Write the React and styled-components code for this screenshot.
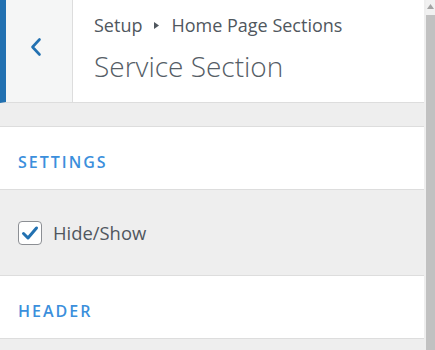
import React, { useState } from 'react'
import styled, { createGlobalStyle } from 'styled-components'

const Global = createGlobalStyle`
  *, *::before, *::after {
    box-sizing: border-box;
  }
  html, body {
    margin: 0;
    padding: 0;
    height: 100%;
    overflow: hidden;
    background: #eeeeee;
  }
  body {
    font-family: "Open Sans", "Noto Sans", sans-serif;
    color: #50575e;
  }
`;

const Frame = styled.div`
  display: flex;
  height: 350px;
  width: 435px;
`;

const Panel = styled.div`
  width: 424px;
  display: flex;
  flex-direction: column;
  overflow: hidden;

  & > * {
    flex-shrink: 0;
  }
`;

const Header = styled.header`
  display: flex;
  height: 103px;
  background: #fff;
  border-bottom: 1px solid #dddddd;
  border-left: 6px solid #2271b1;
`;

const BackBtn = styled.button`
  width: 67px;
  border: none;
  border-right: 1px solid #dddddd;
  background: #f5f6f6;
  color: #2271b1;
  display: flex;
  align-items: center;
  justify-content: center;
  padding: 0 6px 8px 0;
  cursor: pointer;
`;

const Titles = styled.div`
  padding: 10px 0 0 21px;
  display: flex;
  flex-direction: column;
`;

const Crumbs = styled.div`
  font-size: 18px;
  line-height: 30px;
  color: #50575e;
  display: flex;
  align-items: center;
  white-space: nowrap;
`;

const Arrow = styled.svg`
  margin: 1px 12px 0 12px;
`;

const Title = styled.h1`
  margin: 6px 0 0;
  font-size: 28px;
  font-weight: 300;
  line-height: 40px;
  color: #555d66;
  white-space: nowrap;
`;

const Gap = styled.div`
  height: ${({ h }) => h}px;
  background: #eeeeee;
`;

const Section = styled.div`
  background: #fff;
  border-top: 1px solid #dddddd;
  border-bottom: 1px solid #dddddd;
  height: 64px;
  display: flex;
  align-items: center;
  padding: 7px 18px 0;
  font-size: 16px;
  font-weight: 600;
  letter-spacing: 2px;
  color: #3b8fdc;
`;

const Body = styled.div`
  height: 85px;
  display: flex;
  align-items: center;
  gap: 11px;
  padding: 0 18px;
  font-size: 18.4px;
  color: #50575e;
  cursor: pointer;
`;

const Box = styled.span`
  width: 24px;
  height: 24px;
  border: 1px solid #8c8f94;
  border-radius: 4px;
  background: #fff;
  display: flex;
  align-items: center;
  justify-content: center;
`;

const Scroll = styled.div`
  margin-left: 2px;
  width: 9px;
  display: flex;
  flex-direction: column;
  background: #c1c1c1;
`;

const ScrollCap = styled.div`
  height: 15px;
  background: #f1f1f1;
  display: flex;
  justify-content: center;
  padding-top: 4px;
`;

const App = () => {
  const [shown, setShown] = useState(true)

  return (
    <>
      <Global />
      <Frame>
        <Panel>
          <Header>
            <BackBtn aria-label="Back">
              <svg width="14" height="20" viewBox="0 0 14 20">
                <path d="M10.5 2.5 L3.5 10 L10.5 17.5" fill="none" stroke="currentColor" strokeWidth="2.6" strokeLinecap="round" strokeLinejoin="round" />
              </svg>
            </BackBtn>
            <Titles>
              <Crumbs>
                Setup
                <Arrow width="5" height="7" viewBox="0 0 5 7">
                  <path d="M0 0 L5 3.5 L0 7 Z" fill="#50575e" />
                </Arrow>
                Home Page Sections
              </Crumbs>
              <Title>Service Section</Title>
            </Titles>
          </Header>
          <Gap h={23} />
          <Section>SETTINGS</Section>
          <Body onClick={() => setShown(!shown)}>
            <Box>
              {shown && (
                <svg width="18" height="16" viewBox="0 0 18 16">
                  <path d="M2.5 8.5 L7 13 L15.5 3" fill="none" stroke="#2271b1" strokeWidth="3" strokeLinecap="round" strokeLinejoin="round" />
                </svg>
              )}
            </Box>
            Hide/Show
          </Body>
          <Section>HEADER</Section>
          <Gap h={12} />
        </Panel>
        <Scroll>
          <ScrollCap>
            <svg width="7" height="5" viewBox="0 0 7 5">
              <path d="M3.5 0 L7 5 L0 5 Z" fill="#a3a3a3" />
            </svg>
          </ScrollCap>
        </Scroll>
      </Frame>
    </>
  )
}

export default App
